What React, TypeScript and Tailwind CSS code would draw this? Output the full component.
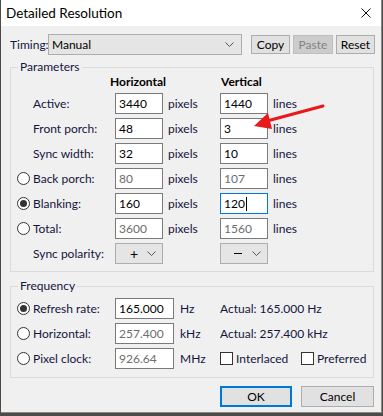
import React from "react";

const FONT = { fontFamily: 'Lato, "Noto Sans", Arial, sans-serif' };

const Radio = ({ checked = false }: { checked?: boolean }) => (
  <span className="w-[13px] h-[13px] rounded-full border border-[#333] bg-white flex items-center justify-center">
    {checked && <span className="w-[7px] h-[7px] rounded-full bg-[#333]" />}
  </span>
);

const Check = () => (
  <span className="w-[13px] h-[13px] border border-[#333] bg-white inline-block" />
);

const Field = ({
  value,
  disabled = false,
  focused = false,
  w = "w-[48px]",
}: {
  value: string;
  disabled?: boolean;
  focused?: boolean;
  w?: string;
}) => (
  <div
    className={`${w} h-[21px] bg-white border flex items-center pl-[3px] ${
      focused ? "border-[#0078d7]" : "border-[#7a7a7a]"
    } ${disabled ? "text-[#6d6d6d]" : "text-black"}`}
  >
    {value}
    {focused && <span className="w-px h-[14px] bg-black ml-px" />}
  </div>
);

const Chevron = () => (
  <svg width="9" height="5" viewBox="0 0 9 5" className="shrink-0">
    <path d="M0.5 0.5 L4.5 4.5 L8.5 0.5" stroke="#555" fill="none" strokeWidth="1" />
  </svg>
);

const Button = ({
  label,
  w,
  disabled = false,
  primary = false,
}: {
  label: string;
  w: string;
  disabled?: boolean;
  primary?: boolean;
}) => (
  <div
    className={`${w} flex items-center justify-center ${
      primary ? "border-2 border-[#0078d7]" : "border"
    } ${
      disabled
        ? "bg-[#cccccc] border-[#bfbfbf] text-[#838383]"
        : primary
          ? "bg-[#e1e1e1] text-black"
          : "bg-[#e1e1e1] border-[#adadad] text-black"
    }`}
  >
    {label}
  </div>
);

type Row = {
  label: string;
  radio?: "on" | "off";
  h: string;
  v: string;
  disabled?: boolean;
  focusV?: boolean;
};

const rows: Row[] = [
  { label: "Active:", h: "3440", v: "1440" },
  { label: "Front porch:", h: "48", v: "3" },
  { label: "Sync width:", h: "32", v: "10" },
  { label: "Back porch:", radio: "off", h: "80", v: "107", disabled: true },
  { label: "Blanking:", radio: "on", h: "160", v: "120", focusV: true },
  { label: "Total:", radio: "off", h: "3600", v: "1560", disabled: true },
];

export default function App() {
  return (
    <div className="w-[383px] h-[416px] bg-[#4d4a48] text-[12px]" style={FONT}>
      <div className="relative w-[381px] h-[413px] ml-px border-r border-b border-[#888] bg-[#f0f0f0] text-[#14143c] flex flex-col">
        {/* title bar */}
        <div className="h-[26px] bg-white flex items-center justify-between pl-[5px] pr-[10px]">
          <span className="text-[13.5px] text-black">Detailed Resolution</span>
          <svg width="10" height="10" viewBox="0 0 10 10">
            <path d="M0.5 0.5 L9.5 9.5 M9.5 0.5 L0.5 9.5" stroke="#111" strokeWidth="1" />
          </svg>
        </div>

        {/* timing row */}
        <div className="flex items-center pl-[9px] pt-[8px] h-[29px]">
          <span className="w-[38px] shrink-0">Timing:</span>
          <div className="w-[194px] shrink-0 h-[21px] bg-[#e5e5e5] border border-[#adadad] flex items-center justify-between pl-[3px] pr-[7px] text-black">
            Manual
            <Chevron />
          </div>
          <div className="flex gap-[3px] ml-[9px] h-[19px]">
            <Button label="Copy" w="w-[39px]" />
            <Button label="Paste" w="w-[40px]" disabled />
            <Button label="Reset" w="w-[39px]" />
          </div>
        </div>

        {/* parameters */}
        <fieldset className="ml-[9px] mr-[7px] mt-[5px] border border-[#dcdcdc] pb-[5px]">
          <legend className="ml-[7px] px-[2px] leading-[14px]">Parameters</legend>
          <div className="flex h-[14px] mt-[1px] items-center font-bold text-black">
            <span className="ml-[99px] w-[111px]">Horizontal</span>
            <span>Vertical</span>
          </div>
          <div className="flex flex-col mt-[2px]">
            {rows.map((r) => (
              <div key={r.label} className="flex items-center h-[25px] pl-[6px]">
                <span className="w-[16px] flex">
                  {r.radio && <Radio checked={r.radio === "on"} />}
                </span>
                <span className="w-[82px]">{r.label}</span>
                <Field value={r.h} disabled={r.disabled} />
                <span className="w-[57px] pl-[5px]">pixels</span>
                <Field value={r.v} disabled={r.disabled} focused={r.focusV} />
                <span className="pl-[5px]">lines</span>
              </div>
            ))}
            <div className="flex items-center h-[25px] pl-[6px]">
              <span className="w-[16px]" />
              <span className="w-[82px]">Sync polarity:</span>
              <div className="w-[48px] h-[21px] bg-[#e5e5e5] border border-[#adadad] flex items-center justify-between pl-[14px] pr-[6px] text-black">
                <span className="text-[14px] leading-none">+</span>
                <Chevron />
              </div>
              <span className="w-[57px]" />
              <div className="w-[48px] h-[21px] bg-[#e5e5e5] border border-[#adadad] flex items-center justify-between pl-[13px] pr-[6px] text-black">
                <span className="w-[8px] h-[1.5px] bg-black" />
                <Chevron />
              </div>
            </div>
          </div>
        </fieldset>

        {/* frequency */}
        <fieldset className="ml-[9px] mr-[7px] mt-[7px] border border-[#dcdcdc] pt-[3px] pb-[6px]">
          <legend className="ml-[7px] px-[2px] leading-[14px]">Frequency</legend>
          <div className="flex items-center h-[25px] pl-[6px]">
            <span className="w-[16px] flex">
              <Radio checked />
            </span>
            <span className="w-[82px]">Refresh rate:</span>
            <Field value="165.000" w="w-[59px]" />
            <span className="w-[46px] pl-[6px]">Hz</span>
            <span>Actual: 165.000 Hz</span>
          </div>
          <div className="flex items-center h-[25px] pl-[6px]">
            <span className="w-[16px] flex">
              <Radio />
            </span>
            <span className="w-[82px]">Horizontal:</span>
            <Field value="257.400" w="w-[59px]" disabled />
            <span className="w-[46px] pl-[6px]">kHz</span>
            <span>Actual: 257.400 kHz</span>
          </div>
          <div className="flex items-center h-[25px] pl-[6px]">
            <span className="w-[16px] flex">
              <Radio />
            </span>
            <span className="w-[82px]">Pixel clock:</span>
            <Field value="926.64" w="w-[59px]" disabled />
            <span className="w-[46px] pl-[6px]">MHz</span>
            <span className="w-[81px] flex items-center gap-[3px]">
              <Check />
              Interlaced
            </span>
            <span className="flex items-center gap-[3px]">
              <Check />
              Preferred
            </span>
          </div>
        </fieldset>

        {/* buttons */}
        <div className="flex justify-end gap-[9px] pr-[7px] mt-[8px] h-[21px]">
          <Button label="OK" w="w-[72px]" primary />
          <Button label="Cancel" w="w-[73px]" />
        </div>

        {/* annotation arrow */}
        <svg
          className="absolute left-0 top-0 pointer-events-none"
          width="381"
          height="413"
          viewBox="0 0 381 413"
        >
          <path d="M322 106 L266 121" stroke="#e8191a" strokeWidth="3" strokeLinecap="round" />
          <path d="M253 126 L267 113 L271 129 Z" fill="#e8191a" />
        </svg>
      </div>
    </div>
  );
}
